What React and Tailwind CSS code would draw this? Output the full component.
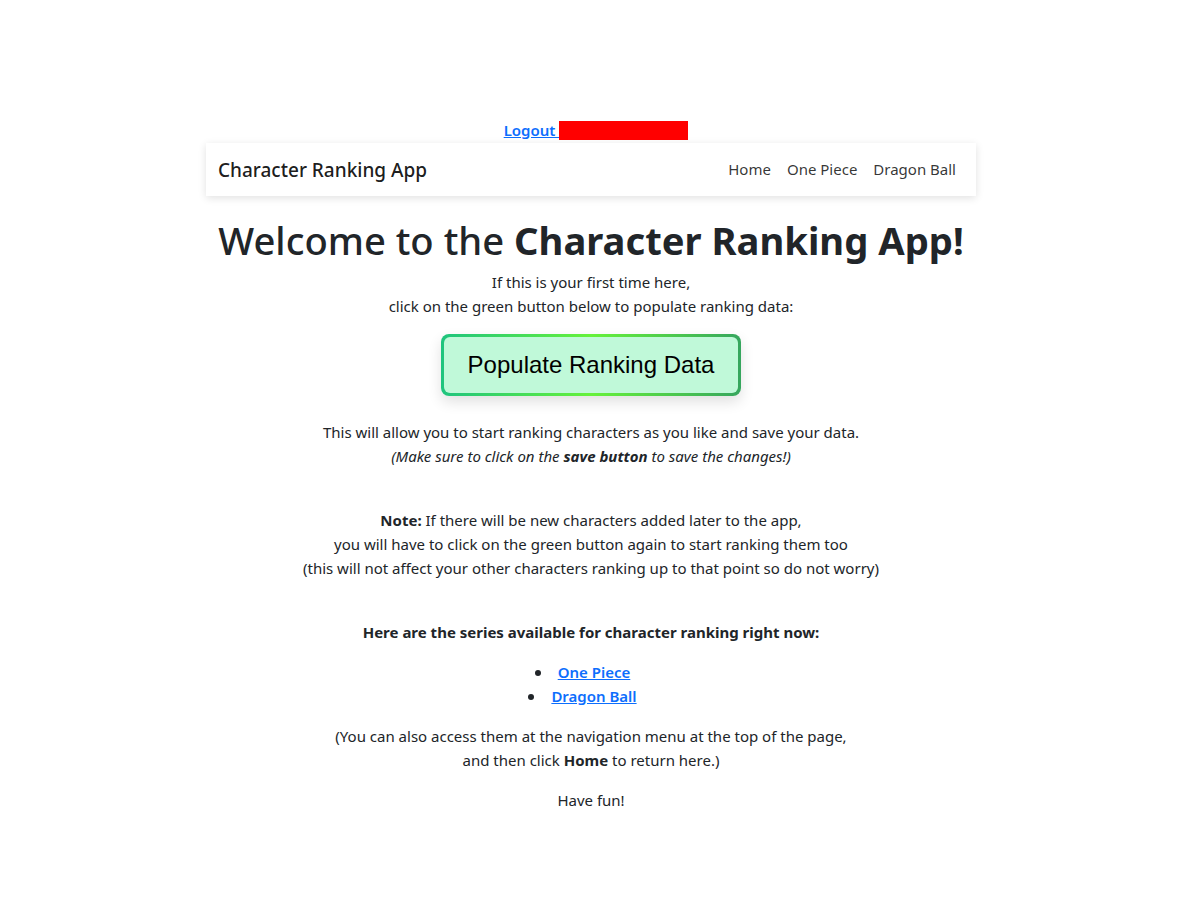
export default function App() {
  const f = { fontFamily: '"Noto Sans", "Open Sans", sans-serif' };
  const Item = ({ children }) => (
    <li className="list-none">
      <span className="relative inline-block">
        <span className="absolute right-full mr-[17px] top-[10px] w-[6px] h-[6px] rounded-full bg-[#212529]"></span>
        <a href="#" className="text-[#0d6efd] underline font-semibold">{children}</a>
      </span>
    </li>
  );
  return (
    <div className="min-h-[900px] bg-white text-[#212529]" style={f}>
      <div className="pt-[118px] flex justify-center pr-[8px]">
        <div className="flex items-center">
          <a href="#" className="text-[#0d6efd] underline font-semibold text-[15px] leading-[24px]">Logout&nbsp;</a>
          <span className="inline-block w-[129px] h-[19px] bg-[#ff0000]"></span>
        </div>
      </div>
      <div className="ml-[206px] w-[770px]">
        <nav className="mt-[1px] h-[53px] flex items-center justify-between px-[12px] bg-white shadow-[0_2px_8px_rgba(0,0,0,0.12)]">
          <span className="text-[19px] font-medium text-black/90 pt-[2px]">Character Ranking App</span>
          <div className="flex gap-[16px] text-[15px] text-black/80 pr-[8px]">
            <a href="#">Home</a>
            <a href="#">One Piece</a>
            <a href="#">Dragon Ball</a>
          </div>
        </nav>
        <div className="text-center text-[15px] leading-[24px]">
          <h1 className="mt-[20px] mb-[6px] text-[38.2px] leading-[48px] font-medium whitespace-nowrap">Welcome to the <b className="font-bold">Character Ranking App!</b></h1>
          <p className="mt-[2px]">If this is your first time here,<br />click on the green button below to populate ranking data:</p>
          <div className="mt-[16px] flex justify-center">
            <div className="p-[3px] rounded-[8px] bg-[linear-gradient(90deg,#1ec47e,#66f23a_50%,#36a65e)] shadow-[0_6px_14px_rgba(0,0,0,0.12)]">
              <button className="w-[294px] h-[56px] rounded-[6px] bg-[#c0f9d9] text-[24px] text-black" style={{ fontFamily: '"Liberation Sans", Arial, sans-serif' }}>Populate Ranking Data</button>
            </div>
          </div>
          <p className="mt-[24px]">This will allow you to start ranking characters as you like and save your data.<br /><i>(Make sure to click on the <b>save button</b> to save the changes!)</i></p>
          <p className="mt-[40px]"><b>Note:</b> If there will be new characters added later to the app,<br />you will have to click on the green button again to start ranking them too<br />(this will not affect your other characters ranking up to that point so do not worry)</p>
          <p className="mt-[40px] font-bold">Here are the series available for character ranking right now:</p>
          <ul className="mt-[16px] pl-[6px]">
            <Item>One Piece</Item>
            <Item>Dragon Ball</Item>
          </ul>
          <p className="mt-[16px]">(You can also access them at the navigation menu at the top of the page,<br />and then click <b>Home</b> to return here.)</p>
          <p className="mt-[16px]">Have fun!</p>
        </div>
      </div>
    </div>
  );
}
